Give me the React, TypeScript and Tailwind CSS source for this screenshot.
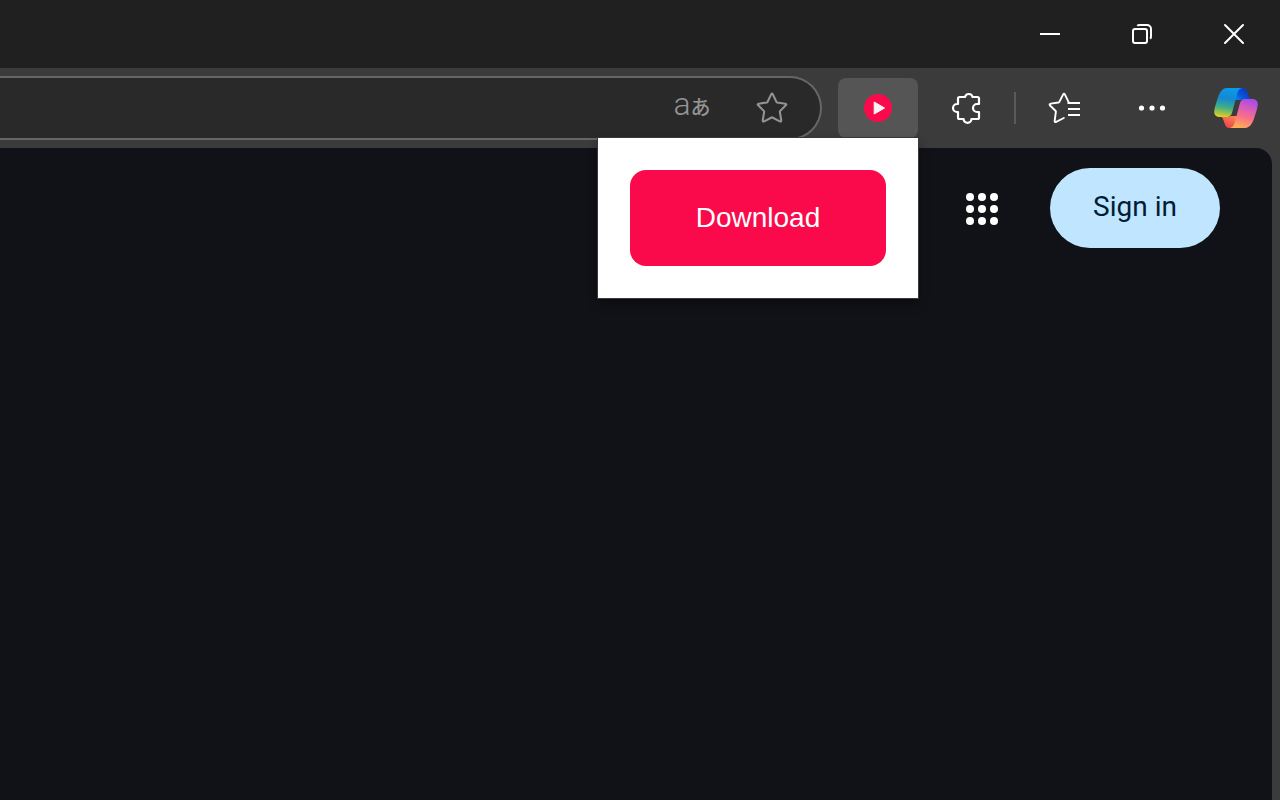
import React from 'react';

function WindowButton({ label, children }: { label: string; children: React.ReactNode }) {
  return (
    <button type="button" aria-label={label} className="flex h-full w-[92px] items-center justify-center text-white">
      {children}
    </button>
  );
}

function TitleBar() {
  return (
    <header className="flex h-[68px] justify-end bg-[#202020]">
      <WindowButton label="Minimize">
        <svg width="24" height="24" viewBox="0 0 24 24" fill="none" stroke="currentColor" strokeWidth="2">
          <path d="M2 12H22" />
        </svg>
      </WindowButton>
      <WindowButton label="Restore">
        <svg width="24" height="24" viewBox="0 0 24 24" fill="none" stroke="currentColor" strokeWidth="2">
          <rect x="3" y="7" width="14" height="14" rx="2" />
          <path d="M7.3 3.8Q8 3 9.4 3H17A4 4 0 0 1 21 7V14.4Q21 16 20.2 16.8" />
        </svg>
      </WindowButton>
      <WindowButton label="Close">
        <svg width="24" height="24" viewBox="0 0 24 24" fill="none" stroke="currentColor" strokeWidth="2">
          <path d="M3 3L21 21M21 3L3 21" strokeLinecap="round" />
        </svg>
      </WindowButton>
    </header>
  );
}

function AddressBar() {
  return (
    <div className="mr-4 flex h-16 min-w-0 flex-1 items-center gap-4 rounded-r-full border-2 border-l-0 border-[#666666] bg-[#292929] pr-4 text-[#939393]">
      <input aria-label="Address" type="text" className="h-full min-w-0 flex-1 bg-transparent px-4 text-2xl text-white outline-none" />
      <button
        type="button"
        aria-label="Translate page"
        className="flex w-16 items-baseline justify-center pb-1 font-['Roboto','Noto_Sans_CJK_JP',sans-serif] leading-8"
      >
        <span className="text-[32px] font-light">a</span>
        <span className="text-[20px] font-medium">あ</span>
      </button>
      <button type="button" aria-label="Add to favorites" className="flex w-16 justify-center">
        <svg width="34" height="34" viewBox="0 0 36 36" fill="none" stroke="currentColor" strokeWidth="2.2" strokeLinejoin="round">
          <path d="M17.1 3.6Q18 2 18.9 3.6L22.8 11.6Q23 12 23.5 12.1L32 13.4Q34 13.8 32.6 15.2L26.5 21.3Q26.2 21.6 26.3 22.1L27.8 31Q28 33 26.2 32.1L18.5 28.1Q18 27.8 17.5 28.1L9.8 32.1Q8 33 8.2 31L9.7 22.1Q9.8 21.6 9.5 21.3L3.4 15.2Q2 13.8 4 13.4L12.5 12.1Q13 12 13.2 11.6Z" />
        </svg>
      </button>
    </div>
  );
}

function DownloadPopup() {
  return (
    <div className="absolute top-full right-0 z-10 w-80 bg-white p-8 shadow-[0_0_0_1px_#38393b,0_5px_10px_rgba(0,0,0,0.4)]">
      <button
        type="button"
        className="h-24 w-full rounded-2xl bg-[#fa0a4b] font-['Liberation_Sans',sans-serif] text-[28px] leading-8 text-white"
      >
        Download
      </button>
    </div>
  );
}

function CopilotLogo() {
  return (
    <svg width="44" height="40" viewBox="0 0 44 40">
      <defs>
        <linearGradient id="copilot-left" x1="14" y1="0" x2="9" y2="30" gradientUnits="userSpaceOnUse">
          <stop offset="0" stopColor="#0b9aea" />
          <stop offset="0.35" stopColor="#1489cf" />
          <stop offset="0.65" stopColor="#3fae86" />
          <stop offset="0.85" stopColor="#a4c444" />
          <stop offset="1" stopColor="#f7d11b" />
        </linearGradient>
        <linearGradient id="copilot-top" x1="32" y1="2" x2="22" y2="12" gradientUnits="userSpaceOnUse">
          <stop offset="0" stopColor="#0b3bc4" />
          <stop offset="0.5" stopColor="#0b52d8" />
          <stop offset="1" stopColor="#0a84f0" />
        </linearGradient>
        <linearGradient id="copilot-right" x1="36" y1="11" x2="27" y2="40" gradientUnits="userSpaceOnUse">
          <stop offset="0" stopColor="#a54bea" />
          <stop offset="0.32" stopColor="#d65cbd" />
          <stop offset="0.62" stopColor="#fa6f87" />
          <stop offset="1" stopColor="#ffae55" />
        </linearGradient>
        <linearGradient id="copilot-bottom" x1="20" y1="28" x2="15" y2="40" gradientUnits="userSpaceOnUse">
          <stop offset="0" stopColor="#fb8350" />
          <stop offset="1" stopColor="#ee4550" />
        </linearGradient>
      </defs>
      <path d="M26 0H29C31.7 0 32.7 2.4 33.6 5.2C34.8 9 35.8 11 38 11.4H31C28.6 11.4 27.5 11.6 26.8 12H20L22 5Z" fill="url(#copilot-top)" />
      <path d="M18 40H15C12.3 40 11.3 37.6 10.4 34.8C9.2 31 8.2 29 6 28.6H13C15.4 28.6 16.5 28.4 17.2 28H24L22 35Z" fill="url(#copilot-bottom)" />
      <path d="M28 0H13C7.5 0 4.8 6 3 12.4C1.4 17.4 0.2 21 0.2 24C0.2 27.5 2.6 29 6 29H12C15.5 29 17.2 27.8 18.3 24L22.3 9C23.6 3.8 24.6 0.8 28 0Z" fill="url(#copilot-left)" />
      <path d="M16 40H31C36.5 40 39.2 34 41 27.6C42.6 22.6 43.8 19 43.8 16C43.8 12.5 41.4 11 38 11H32C28.5 11 26.8 12.2 25.7 16L21.7 31C20.4 36.2 19.4 39.2 16 40Z" fill="url(#copilot-right)" />
    </svg>
  );
}

function Toolbar() {
  return (
    <nav aria-label="Browser toolbar" className="flex h-20 items-center bg-[#3b3b3b] pr-1 text-white">
      <AddressBar />
      <div className="relative h-[60px] w-20">
        <button type="button" aria-label="Video downloader" className="flex h-full w-full items-center justify-center rounded-lg bg-[#555555]">
          <svg width="28" height="28" viewBox="0 0 28 28">
            <circle cx="14" cy="14" r="14" fill="#fa0a4b" />
            <path d="M10.2 8L20.6 14L10.2 20Z" fill="#f5f5f5" stroke="#f5f5f5" strokeWidth="1" strokeLinejoin="round" />
          </svg>
        </button>
        <DownloadPopup />
      </div>
      <button type="button" aria-label="Extensions" className="ml-2 flex w-20 justify-center">
        <svg width="32" height="32" viewBox="0 0 32 32" fill="none" stroke="currentColor" strokeWidth="2.2" strokeLinejoin="round">
          <path d="M9.5 5H15A3.9 3.9 0 0 1 22.6 5H27.5Q29 5 29 6.5V12H27A4 4 0 0 0 27 20H29V25.5Q29 27 27.5 27H21.4A3.9 3.9 0 0 1 13.6 27H9.5Q8 27 8 25.5V20H7A4 4 0 0 1 7 12H8V6.5Q8 5 9.5 5Z" />
        </svg>
      </button>
      <div className="mx-2 h-8 w-0.5 bg-[#5a5a5a]" />
      <button type="button" aria-label="Favorites" className="flex w-20 justify-center">
        <svg width="36" height="36" viewBox="0 0 36 36" fill="none" stroke="currentColor" strokeWidth="2" strokeLinejoin="round" strokeLinecap="round">
          <path
            transform="translate(1 1) scale(0.945)"
            d="M17.8 28.6L9.7 32.6Q8 33.3 8.1 31.5L9.4 22Q9.5 21.6 9.2 21.2L3.2 15.4Q2 13.8 4 13.4L12.2 12.2Q12.7 12 13 11.6L17 3.8Q18 2 19 3.8L23 12"
          />
          <path d="M22.5 13H33M23 19H33M23 25H33" strokeLinecap="square" />
        </svg>
      </button>
      <button type="button" aria-label="Settings and more" className="ml-2 flex w-20 justify-center">
        <svg width="28" height="8" viewBox="0 0 28 8" fill="currentColor">
          <circle cx="3.5" cy="4" r="2.6" />
          <circle cx="14" cy="4" r="2.6" />
          <circle cx="24.5" cy="4" r="2.6" />
        </svg>
      </button>
      <button type="button" aria-label="Copilot" className="ml-1 flex w-20 justify-center">
        <CopilotLogo />
      </button>
    </nav>
  );
}

const gridSteps = [4, 16, 28];

function Page() {
  return (
    <main className="mr-2 flex-1 rounded-tr-2xl bg-[#111217]">
      <div className="flex items-center justify-end gap-[50px] pt-5 pr-[52px]">
        <button type="button" aria-label="Apps" className="text-white">
          <svg width="34" height="34" viewBox="0 0 34 34" fill="currentColor">
            {gridSteps.map((y) => gridSteps.map((x) => <circle key={`${x}-${y}`} cx={x} cy={y + 2} r="4" />))}
          </svg>
        </button>
        <a
          href="#signin"
          className="flex h-20 w-[170px] items-center justify-center rounded-full bg-[#c0e6ff] pb-0.5 font-[Roboto,sans-serif] text-[28px] leading-8 text-[#001d35]"
        >
          Sign in
        </a>
      </div>
    </main>
  );
}

export default function App() {
  return (
    <div className="flex min-h-screen flex-col bg-[#3b3b3b]">
      <TitleBar />
      <Toolbar />
      <Page />
    </div>
  );
}
